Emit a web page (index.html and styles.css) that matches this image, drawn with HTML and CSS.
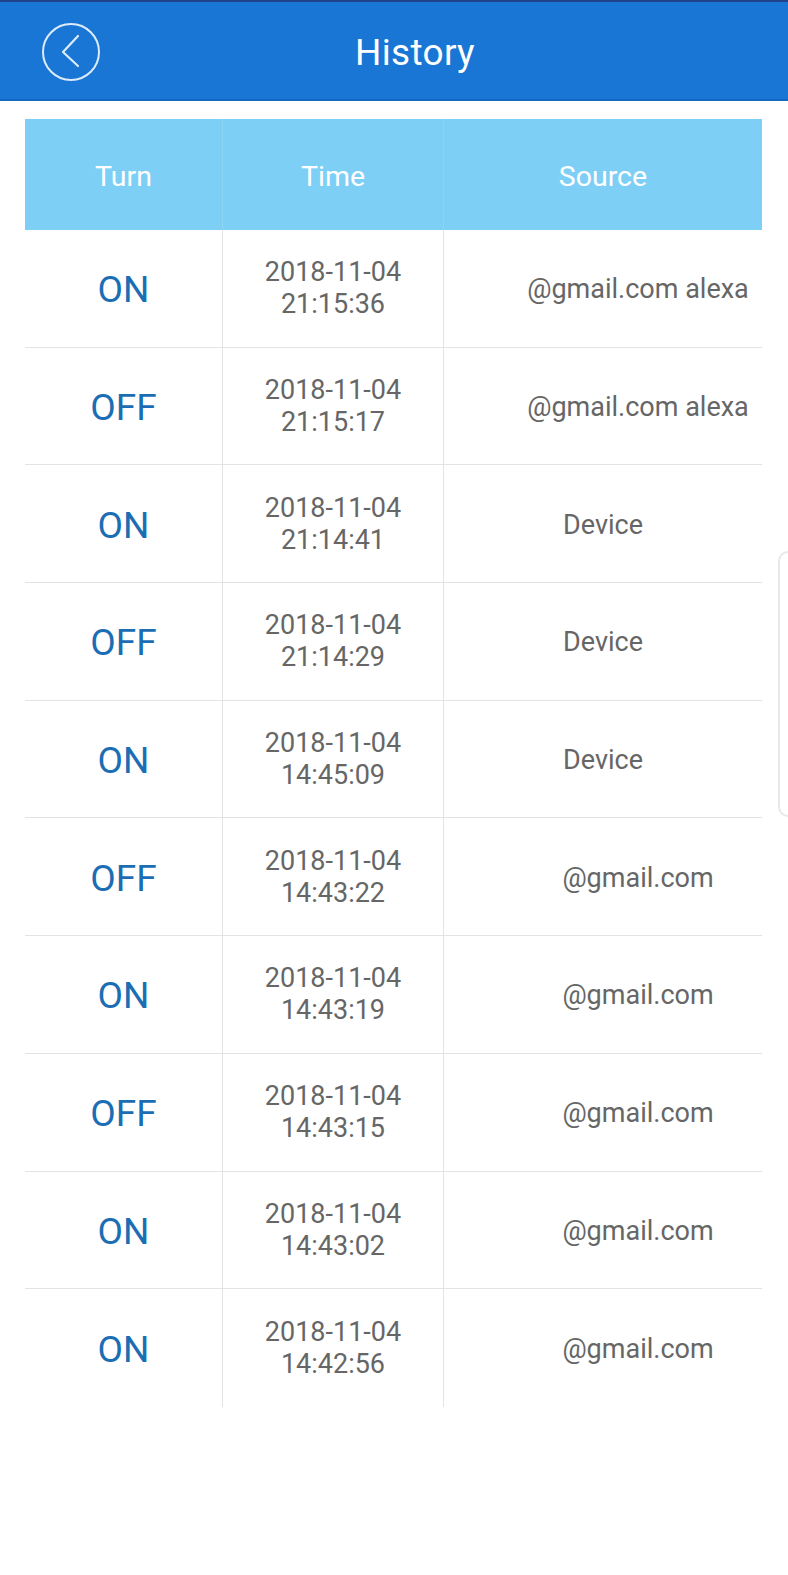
FILE: index.html
```html
<!DOCTYPE html>
<html>
<head>
<meta charset="utf-8">
<link rel="stylesheet" href="styles.css">
</head>
<body>
<header class="topbar">
  <button class="back" aria-label="Back">
    <svg width="60" height="60" viewBox="0 0 60 60">
      <circle cx="30" cy="30" r="28" fill="none" stroke="#dcecfb" stroke-width="2"/>
      <path d="M37 14 L22 30 L37 44" fill="none" stroke="#dcecfb" stroke-width="2.2" stroke-linecap="round" stroke-linejoin="round"/>
    </svg>
  </button>
  <h1 class="title">History</h1>
</header>

<div class="table">
  <div class="row head">
    <div class="cell">Turn</div>
    <div class="cell">Time</div>
    <div class="cell">Source</div>
  </div>

  <div class="row"><div class="cell turn">ON</div><div class="cell time">2018-11-04<br>21:15:36</div><div class="cell src"><span class="mask"></span>@gmail.com alexa</div></div>
  <div class="row"><div class="cell turn">OFF</div><div class="cell time">2018-11-04<br>21:15:17</div><div class="cell src"><span class="mask"></span>@gmail.com alexa</div></div>
  <div class="row"><div class="cell turn">ON</div><div class="cell time">2018-11-04<br>21:14:41</div><div class="cell src">Device</div></div>
  <div class="row"><div class="cell turn">OFF</div><div class="cell time">2018-11-04<br>21:14:29</div><div class="cell src">Device</div></div>
  <div class="row"><div class="cell turn">ON</div><div class="cell time">2018-11-04<br>14:45:09</div><div class="cell src">Device</div></div>
  <div class="row"><div class="cell turn">OFF</div><div class="cell time">2018-11-04<br>14:43:22</div><div class="cell src"><span class="mask"></span>@gmail.com</div></div>
  <div class="row"><div class="cell turn">ON</div><div class="cell time">2018-11-04<br>14:43:19</div><div class="cell src"><span class="mask"></span>@gmail.com</div></div>
  <div class="row"><div class="cell turn">OFF</div><div class="cell time">2018-11-04<br>14:43:15</div><div class="cell src"><span class="mask"></span>@gmail.com</div></div>
  <div class="row"><div class="cell turn">ON</div><div class="cell time">2018-11-04<br>14:43:02</div><div class="cell src"><span class="mask"></span>@gmail.com</div></div>
  <div class="row last"><div class="cell turn">ON</div><div class="cell time">2018-11-04<br>14:42:56</div><div class="cell src"><span class="mask"></span>@gmail.com</div></div>
</div>

<div class="edge-handle"></div>
</body>
</html>
```

FILE: styles.css
```css
* { box-sizing: border-box; }

html, body {
  margin: 0;
  padding: 0;
  background: #ffffff;
  font-family: Roboto, "Noto Sans", "Liberation Sans", sans-serif;
}

.topbar {
  position: relative;
  height: 101px;
  background: #1976d4;
  border-top: 2px solid #21418a;
  border-bottom: 2px solid #1567c4;
  display: flex;
  align-items: center;
  justify-content: center;
  padding-left: 42px;
  padding-top: 3px;
}

.back {
  position: absolute;
  left: 41px;
  top: 20px;
  width: 60px;
  height: 60px;
  padding: 0;
  border: 0;
  background: transparent;
}

.back svg { display: block; }

.title {
  margin: 0;
  color: #ffffff;
  font-weight: 400;
  font-size: 37px;
  letter-spacing: 0.3px;
}

.table {
  margin: 18px 26px 0 25px;
  width: 737px;
}

.row {
  display: grid;
  grid-template-columns: 197px 221px 319px;
  height: 117.7px;
  border-bottom: 1px solid #e3e3e3;
}

.row.last { border-bottom: 0; }

.row.head {
  height: 111px;
  background: #7ecff6;
  border-bottom: 0;
}

.cell {
  display: flex;
  align-items: center;
  justify-content: center;
  text-align: center;
}

.cell + .cell { border-left: 1px solid #e3e3e3; }

.head .cell {
  color: #ffffff;
  font-size: 28.5px;
  padding-top: 3px;
}

.head .cell + .cell { border-left: 1px solid #8ad4f6; }

.turn {
  color: #1b6db4;
  font-size: 37px;
  padding-top: 3px;
}

.time {
  color: #666666;
  font-size: 27px;
  line-height: 32px;
}

.src {
  color: #666666;
  font-size: 27px;
  padding-top: 2px;
}

.mask {
  display: inline-block;
  width: 70px;
}

.edge-handle {
  position: fixed;
  right: 0;
  top: 551px;
  width: 10px;
  height: 266px;
  border: 2px solid #e8e8e8;
  border-right: 0;
  border-radius: 10px 0 0 10px;
  background: #ffffff;
}
```
